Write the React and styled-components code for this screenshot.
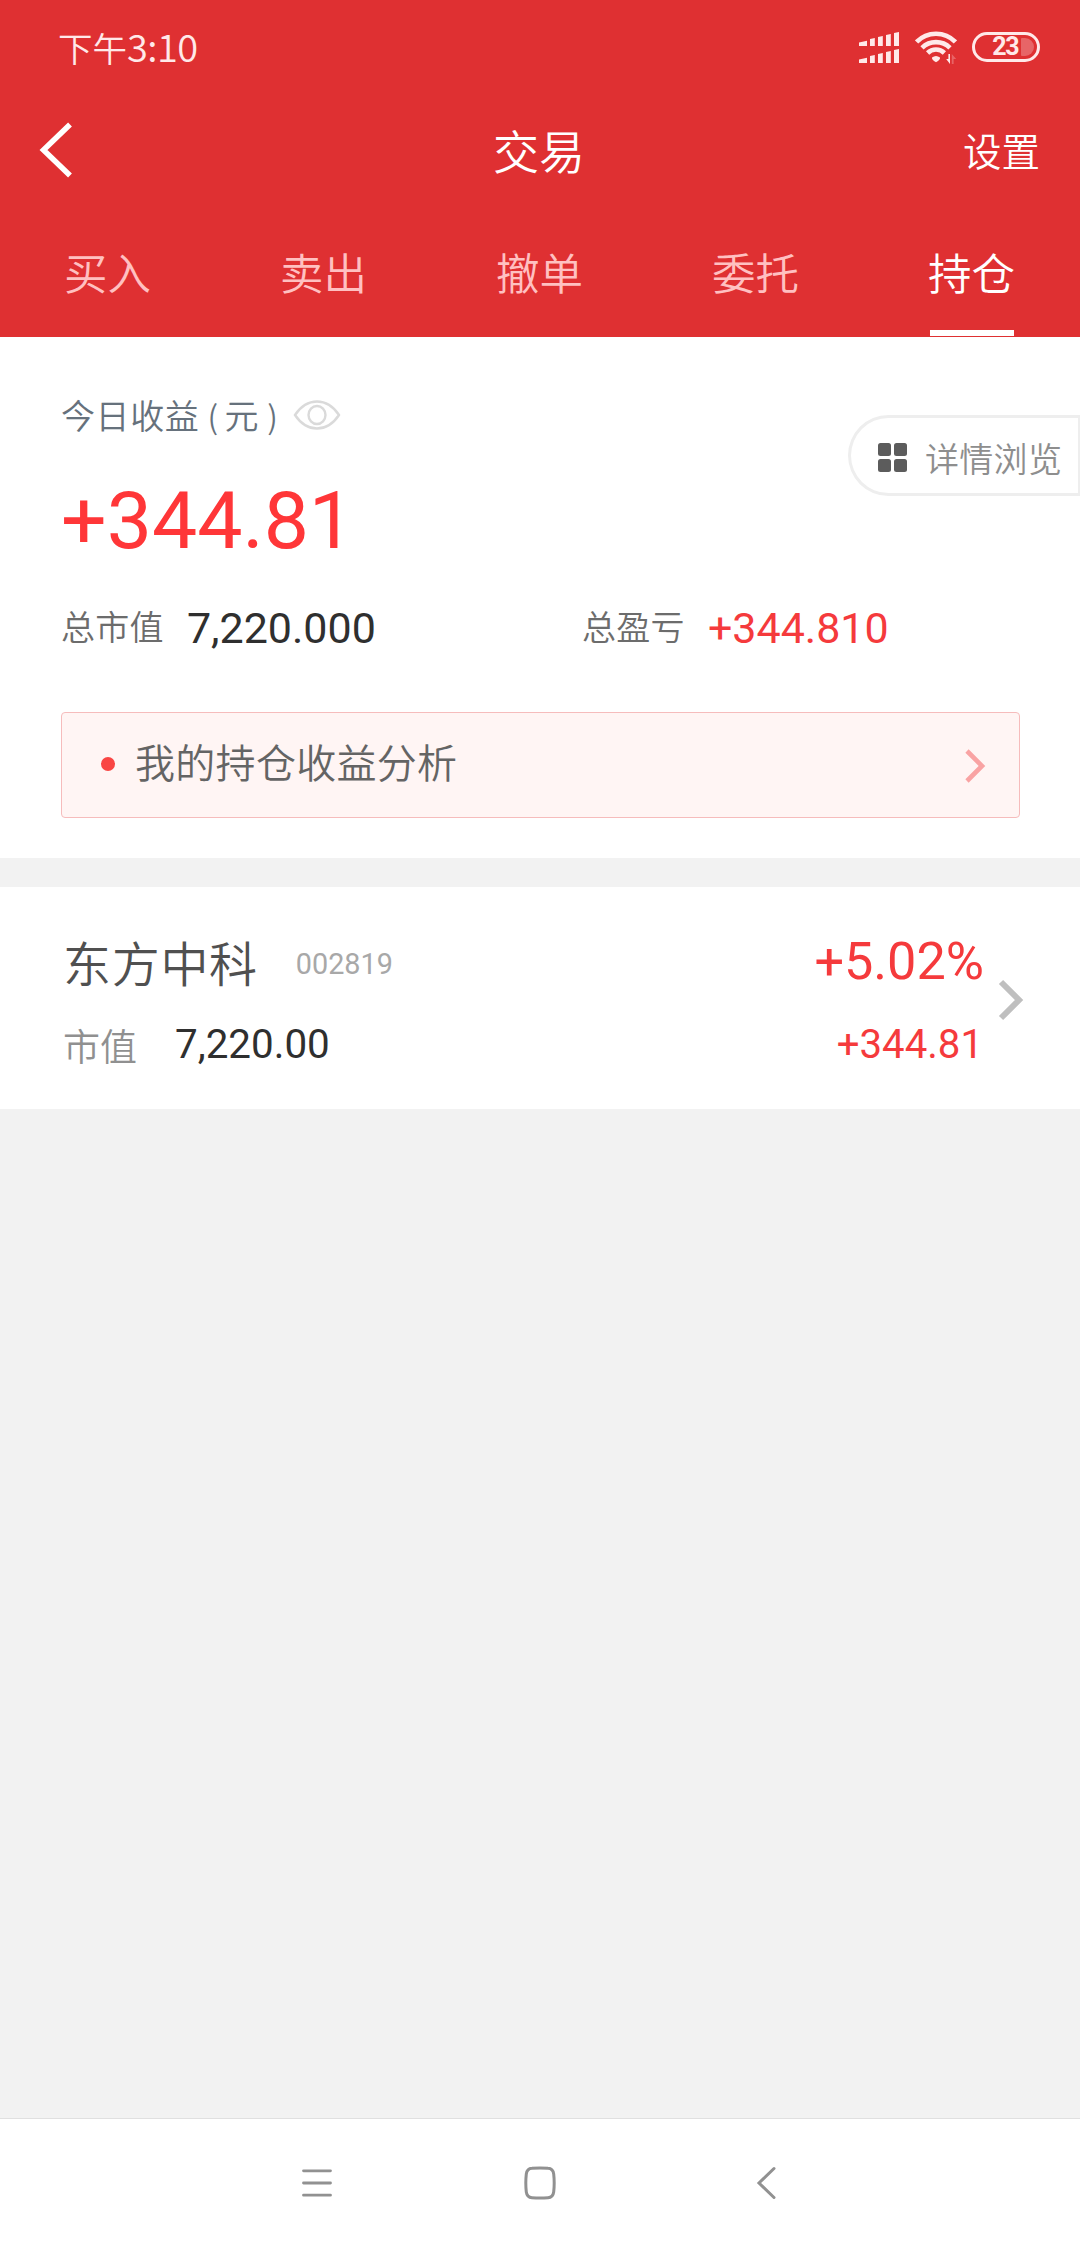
import React, { useState } from "react";
import styled, { createGlobalStyle } from "styled-components";

const GlobalStyle = createGlobalStyle`
  * {
    box-sizing: border-box;
  }
  body {
    margin: 0;
    background: #f2f2f2;
    font-family: "Noto Sans CJK SC", "Noto Sans", sans-serif;
    font-weight: 350;
  }
  svg {
    display: block;
    flex: none;
  }
`;

const Page = styled.div`
  display: flex;
  flex-direction: column;
  width: 1080px;
  height: 2248px;
  overflow: hidden;
  background: #f2f2f2;
`;

const Header = styled.header`
  height: 337px;
  background: #df3032;
  color: #fff;
`;

const StatusBar = styled.div`
  display: flex;
  align-items: center;
  justify-content: space-between;
  height: 94px;
  padding: 0 39px 0 58px;
`;

const Clock = styled.div`
  display: flex;
  align-items: baseline;
  margin-top: -2px;
  font-size: 34.5px;
  line-height: 50px;
  color: #ffe9e9;
`;

const ClockDigits = styled.span`
  font-size: 38px;
  letter-spacing: -0.6px;
`;

const StatusIcons = styled.div`
  display: flex;
  align-items: center;
`;

const Battery = styled.div`
  display: flex;
  align-items: center;
  justify-content: flex-end;
  gap: 3px;
  width: 68px;
  height: 30px;
  margin: 0 1px 0 15px;
  padding-right: 3px;
  border: 3px solid #ffe9e9;
  border-radius: 15px;
  font-family: Roboto, sans-serif;
  font-size: 25px;
  line-height: 24px;
  font-weight: 700;
  letter-spacing: -1.5px;
  color: #ffe9e9;
`;

const BatteryLevel = styled.div`
  width: 13px;
  height: 18px;
  border-radius: 1px 9px 9px 1px;
  background: rgba(255, 255, 255, 0.26);
`;

const NavBar = styled.div`
  display: grid;
  grid-template-columns: 1fr auto 1fr;
  align-items: center;
  height: 111px;
  padding: 0 40px 0 38px;
`;

const Title = styled.h1`
  margin: 0;
  padding-bottom: 2px;
  font-size: 46px;
  line-height: 60px;
  font-weight: 350;
`;

const Settings = styled.div`
  justify-self: end;
  padding-bottom: 1px;
  font-size: 38.5px;
  line-height: 60px;
`;

const Tabs = styled.div`
  display: grid;
  grid-template-columns: repeat(5, 1fr);
  height: 131px;
`;

const Tab = styled.div`
  display: flex;
  flex-direction: column;
  justify-content: space-between;
  width: 84px;
  margin: 0 auto;
  padding-top: 37px;
  font-size: 43.5px;
  line-height: 60px;
  text-indent: -2px;
  white-space: nowrap;
  cursor: pointer;
  color: ${(props) => (props.$active ? "#fff" : "#ffc0c1")};

  &::after {
    content: "";
    height: 6px;
    background: ${(props) => (props.$active ? "#fff" : "transparent")};
  }
`;

const Summary = styled.section`
  height: 521px;
  padding: 53px 60px 0 61px;
  background: #fff;
`;

const SummaryTop = styled.div`
  display: flex;
  justify-content: space-between;
  height: 200px;
`;

const TodayLabel = styled.div`
  display: flex;
  align-items: center;
  height: 50px;
  font-size: 34px;
  line-height: 50px;
  letter-spacing: 0.6px;
  color: #66717c;
`;

const Paren = styled.span`
  margin: 0 6px 0 8px;
  font-size: 32px;
`;

const EyeButton = styled.div`
  margin-left: 9px;
`;

const TodayProfit = styled.div`
  margin-top: 31px;
  font-family: Roboto, sans-serif;
  font-size: 80.5px;
  line-height: 100px;
  font-weight: 400;
  color: #ff3638;
`;

const DetailButton = styled.div`
  display: flex;
  align-items: center;
  width: 232px;
  height: 81px;
  margin: 25px -60px 0 0;
  padding: 4px 0 0 27px;
  border: 3px solid #eeeeee;
  border-right-width: 2px;
  border-radius: 41px 0 0 41px;
  font-size: 34px;
  line-height: 50px;
  letter-spacing: 0.3px;
  color: #8e8e8e;
`;

const DetailText = styled.span`
  margin-left: 18px;
  white-space: nowrap;
`;

const Totals = styled.div`
  display: grid;
  grid-template-columns: 521px 1fr;
  height: 122px;
  padding-top: 4px;
`;

const Total = styled.div`
  display: flex;
  align-items: center;
  height: 70px;
`;

const TotalLabel = styled.span`
  margin-bottom: 6px;
  font-size: 34px;
  line-height: 50px;
  letter-spacing: 0.3px;
  color: #6c6c6c;
`;

const Amount = styled.span`
  margin-left: ${(props) => props.$gap || 0}px;
  font-family: Roboto, sans-serif;
  font-size: ${(props) => props.$size}px;
  line-height: 1.2;
  font-weight: 400;
  color: ${(props) => (props.$up ? "#f53a3c" : "#2f2f2f")};
`;

const Analysis = styled.div`
  display: flex;
  align-items: center;
  height: 106px;
  padding: 0 33px 0 39px;
  border: 1.5px solid #f6bcbc;
  border-radius: 4px;
  background: #fff5f4;
`;

const Dot = styled.span`
  width: 14px;
  height: 14px;
  margin: 0 20px 2px 0;
  border-radius: 50%;
  background: #f94543;
`;

const AnalysisText = styled.span`
  flex: 1;
  padding-bottom: 9px;
  font-size: 40px;
  line-height: 60px;
  letter-spacing: 0.3px;
  color: #646464;
`;

const AnalysisArrow = styled.svg`
  margin-top: 2px;
`;

const Holding = styled.section`
  display: flex;
  align-items: center;
  height: 222px;
  margin-top: 29px;
  padding: 0 56px 0 63px;
  background: #fff;
`;

const HoldingBody = styled.div`
  flex: 1;
  padding-top: 10px;
`;

const HoldingRow = styled.div`
  display: flex;
  align-items: center;
  justify-content: space-between;
  height: ${(props) => props.$height}px;
  padding-right: ${(props) => props.$inset || 0}px;
`;

const HoldingCell = styled.div`
  display: flex;
  align-items: center;
`;

const StockName = styled.span`
  padding-bottom: 3px;
  font-size: 48px;
  line-height: 64px;
  letter-spacing: 0.7px;
  color: #505050;
`;

const StockCode = styled.span`
  margin-left: 38px;
  padding-top: 3px;
  font-family: Roboto, sans-serif;
  font-size: 28.8px;
  font-weight: 400;
  color: #a8a8a8;
`;

const ValueLabel = styled.span`
  padding-bottom: 1px;
  font-size: 37px;
  line-height: 50px;
  color: #909090;
`;

const HoldingArrow = styled.svg`
  margin-top: 3px;
`;

const SystemNav = styled.nav`
  display: flex;
  align-items: center;
  gap: 192px;
  height: 130px;
  margin-top: auto;
  padding: 0 0 2px 302px;
  border-top: 1px solid #e0e0e0;
  background: #fff;
`;

const SignalIcon = () => (
  <svg width="40" height="31" viewBox="0 0 40 31" fill="#ffe9e9">
    {[14, 31].map((y) => (
      <path
        key={y}
        d={`M0 ${y}v-3.6l8-1.6v5.2z M11 ${y}v-7l4.8-1v8z M19 ${y}v-9l4.8-1v10z M27 ${y}v-11l4.8-1v12z M35 ${y}v-13l5-1v14z`}
      />
    ))}
  </svg>
);

const WifiIcon = () => (
  <svg width="42" height="34" viewBox="0 0 42 34" style={{ marginLeft: 16 }}>
    <g fill="none" stroke="#ffe9e9" strokeWidth="4.6">
      <path d="M1.6 12A27 27 0 0 1 40.4 12" />
      <path d="M7 17.8A20 20 0 0 1 35 17.8" />
      <path d="M12.6 23A12 12 0 0 1 29.4 23" />
    </g>
    <path d="M17 27.500q4-3 8 0q.6 2-4 4.800q-4.600-2.800-4-4.800z" fill="#ffe9e9" />
    <path d="M35 24v10l-3.800-5h2.200v-5z" fill="#ffe9e9" />
    <path d="M36.800 34v-10l4.400 5h-2.600v5z" fill="#ffe9e9" opacity="0.28" />
  </svg>
);

const BackIcon = () => (
  <svg width="36" height="60" viewBox="0 0 36 60">
    <path d="M32 4.500L5.500 30L32 55.500" fill="none" stroke="#fff" strokeWidth="5.500" />
  </svg>
);

const EyeIcon = () => (
  <svg width="48" height="32" viewBox="0 0 48 32" fill="none" stroke="#dadada" strokeWidth="2.400">
    <path d="M2 16C8 7 15 2.500 24 2.500S40 7 46 16C40 25 33 29.500 24 29.500S8 25 2 16z" />
    <ellipse cx="24" cy="16" rx="8.500" ry="9" />
  </svg>
);

const GridIcon = () => (
  <svg width="29" height="29" viewBox="0 0 29 29" fill="#5c5c5c">
    <rect width="13" height="13" rx="2.500" />
    <rect x="16" width="13" height="13" rx="2.500" />
    <rect y="16" width="13" height="13" rx="2.500" />
    <rect x="16" y="16" width="13" height="13" rx="2.500" />
  </svg>
);

const tabs = ["买入", "卖出", "撤单", "委托", "持仓"];

const App = () => {
  const [activeTab, setActiveTab] = useState("持仓");

  return (
    <Page>
      <GlobalStyle />
      <Header>
        <StatusBar>
          <Clock>
            下午<ClockDigits>3:10</ClockDigits>
          </Clock>
          <StatusIcons>
            <SignalIcon />
            <WifiIcon />
            <Battery>
              23
              <BatteryLevel />
            </Battery>
          </StatusIcons>
        </StatusBar>
        <NavBar>
          <BackIcon />
          <Title>交易</Title>
          <Settings>设置</Settings>
        </NavBar>
        <Tabs>
          {tabs.map((tab) => (
            <Tab key={tab} $active={activeTab === tab} onClick={() => setActiveTab(tab)}>
              {tab}
            </Tab>
          ))}
        </Tabs>
      </Header>

      <Summary>
        <SummaryTop>
          <div>
            <TodayLabel>
              今日收益<Paren>(</Paren>元<Paren>)</Paren>
              <EyeButton>
                <EyeIcon />
              </EyeButton>
            </TodayLabel>
            <TodayProfit>+344.81</TodayProfit>
          </div>
          <DetailButton>
            <GridIcon />
            <DetailText>详情浏览</DetailText>
          </DetailButton>
        </SummaryTop>
        <Totals>
          <Total>
            <TotalLabel>总市值</TotalLabel>
            <Amount $size={43} $gap={23}>7,220.000</Amount>
          </Total>
          <Total>
            <TotalLabel>总盈亏</TotalLabel>
            <Amount $size={43} $gap={23} $up>+344.810</Amount>
          </Total>
        </Totals>
        <Analysis>
          <Dot />
          <AnalysisText>我的持仓收益分析</AnalysisText>
          <AnalysisArrow width="21" height="36" viewBox="0 0 21 36">
            <path d="M2 3L17 18L2 33" fill="none" stroke="#f9a3a3" strokeWidth="4.600" />
          </AnalysisArrow>
        </Analysis>
      </Summary>

      <Holding>
        <HoldingBody>
          <HoldingRow $height={84}>
            <HoldingCell>
              <StockName>东方中科</StockName>
              <StockCode>002819</StockCode>
            </HoldingCell>
            <Amount $size={52.2} $up>+5.02%</Amount>
          </HoldingRow>
          <HoldingRow $height={82} $inset={1}>
            <HoldingCell>
              <ValueLabel>市值</ValueLabel>
              <Amount $size={40.4} $gap={38}>7,220.00</Amount>
            </HoldingCell>
            <Amount $size={40.2} $up>+344.81</Amount>
          </HoldingRow>
        </HoldingBody>
        <HoldingArrow width="40" height="44" viewBox="0 0 40 44">
          <path d="M17 4L35 22L17 40" fill="none" stroke="#bfbfbf" strokeWidth="6" />
        </HoldingArrow>
      </Holding>

      <SystemNav>
        <svg width="30" height="32" viewBox="0 0 30 32">
          <path d="M1.500 3.800H28.500M1.500 16H28.500M1.500 28.200H28.500" stroke="#919191" strokeWidth="2.800" strokeLinecap="round" />
        </svg>
        <svg width="32" height="34" viewBox="0 0 32 34">
          <path
            d="M8 2.300Q16 1.500 24 2.300Q29 2.600 29.700 8Q30.700 17 29.700 26Q29 31.400 24 31.700Q16 32.500 8 31.700Q3 31.400 2.300 26Q1.300 17 2.300 8Q3 2.600 8 2.300z"
            fill="none"
            stroke="#919191"
            strokeWidth="3"
          />
        </svg>
        <svg width="30" height="34" viewBox="0 0 30 34">
          <path d="M26 2.500L11 17L26 31.500" fill="none" stroke="#919191" strokeWidth="3" strokeLinecap="round" />
        </svg>
      </SystemNav>
    </Page>
  );
};

export default App;
